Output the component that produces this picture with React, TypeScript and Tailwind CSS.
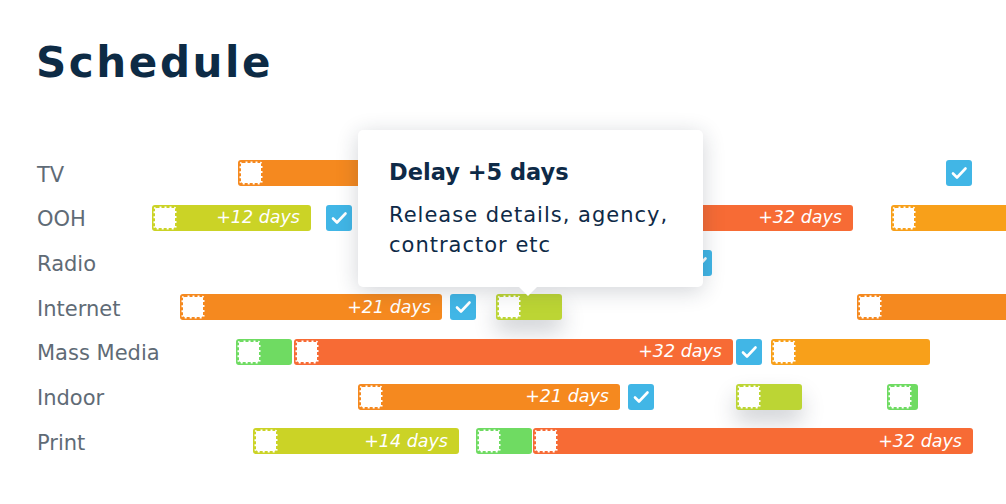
import React from "react";

type Item =
  | { kind: "bar"; left: number; right: number; color: string; text?: string; lifted?: boolean }
  | { kind: "check"; left: number };

const ORANGE = "#f5891f";
const RED = "#f76b35";
const AMBER = "#f8a01a";
const LIME = "#cbd326";
const LIME2 = "#bcd534";
const GREEN = "#6fdb62";

// left/right are positions on the timeline (px from page edge)
const rows: { label: string; items: Item[] }[] = [
  {
    label: "TV",
    items: [
      { kind: "bar", left: 238, right: 420, color: ORANGE },
      { kind: "check", left: 946 },
    ],
  },
  {
    label: "OOH",
    items: [
      { kind: "bar", left: 152, right: 311, color: LIME, text: "+12 days" },
      { kind: "check", left: 326 },
      { kind: "bar", left: 600, right: 853, color: RED, text: "+32 days" },
      { kind: "bar", left: 891, right: 1040, color: AMBER },
    ],
  },
  {
    label: "Radio",
    items: [{ kind: "check", left: 686 }],
  },
  {
    label: "Internet",
    items: [
      { kind: "bar", left: 180, right: 442, color: ORANGE, text: "+21 days" },
      { kind: "check", left: 450 },
      { kind: "bar", left: 496, right: 562, color: LIME2, lifted: true },
      { kind: "bar", left: 857, right: 1040, color: ORANGE },
    ],
  },
  {
    label: "Mass Media",
    items: [
      { kind: "bar", left: 236, right: 292, color: GREEN },
      { kind: "bar", left: 294, right: 733, color: RED, text: "+32 days" },
      { kind: "check", left: 736 },
      { kind: "bar", left: 771, right: 930, color: AMBER },
    ],
  },
  {
    label: "Indoor",
    items: [
      { kind: "bar", left: 358, right: 620, color: ORANGE, text: "+21 days" },
      { kind: "check", left: 628 },
      { kind: "bar", left: 736, right: 802, color: LIME2, lifted: true },
      { kind: "bar", left: 887, right: 918, color: GREEN },
    ],
  },
  {
    label: "Print",
    items: [
      { kind: "bar", left: 253, right: 459, color: LIME, text: "+14 days" },
      { kind: "bar", left: 476, right: 532, color: GREEN },
      { kind: "bar", left: 533, right: 973, color: RED, text: "+32 days" },
    ],
  },
];

// white square with a dotted outline at the start of each bar
const DottedBox = ({ color }: { color: string }) => (
  <svg width="26" height="26" viewBox="0 0 26 26" className="absolute left-0 top-0">
    <rect x="1.5" y="1.5" width="23" height="23" rx="3" fill="#fff" stroke={color} strokeWidth="3" strokeDasharray="3 2" />
  </svg>
);

const Check = ({ left }: { left: number }) => (
  <div
    className="absolute top-1/2 -translate-y-1/2 w-[26px] h-[26px] rounded-[3px] bg-[#41b6e6] flex items-center justify-center"
    style={{ left }}
  >
    <svg width="18" height="18" viewBox="0 0 18 18" fill="none">
      <path d="M3 9.5l4 4L15.5 4.5" stroke="#fff" strokeWidth="2.6" strokeLinecap="round" strokeLinejoin="round" />
    </svg>
  </div>
);

const Bar = ({ item }: { item: Extract<Item, { kind: "bar" }> }) => (
  <div
    className={`absolute top-1/2 -translate-y-1/2 h-[26px] rounded-[3px] flex items-center justify-end pr-[11px] ${
      item.lifted ? "shadow-[0_12px_22px_rgba(40,50,70,0.22)]" : ""
    }`}
    style={{ left: item.left, width: item.right - item.left, backgroundColor: item.color }}
  >
    <DottedBox color={item.color} />
    {item.text && <span className="text-white italic text-[17.5px] leading-none">{item.text}</span>}
  </div>
);

export default function App() {
  return (
    <div className="relative w-[1006px] h-[504px] overflow-hidden bg-white font-['DejaVu_Sans',sans-serif]">
      <h1 className="pl-[36px] pt-[38px] text-[42px] leading-[50px] font-bold text-[#0d2b45] tracking-[2.6px]">
        Schedule
      </h1>

      <div className="mt-[63px]">
        {rows.map((row) => (
          <div key={row.label} className="relative h-[44.67px] flex items-center pl-[37px]">
            <span className="pt-[4px] text-[21px] text-[#5f6b76]">{row.label}</span>
            {row.items.map((item, i) =>
              item.kind === "check" ? <Check key={i} left={item.left} /> : <Bar key={i} item={item} />
            )}
          </div>
        ))}
      </div>

      {/* tooltip */}
      <div className="absolute left-[358px] top-[130px] w-[345px] h-[157px] bg-white rounded-[5px] shadow-[0_4px_22px_rgba(30,40,60,0.2)] pl-[31px] pt-[26px] text-[#0e2a47]">
        <div className="text-[22.5px] font-bold leading-[32px]">Delay +5 days</div>
        <div className="mt-[12px] text-[21px] leading-[30px] tracking-[1px]">
          Release details, agency,
          <br />
          contractor etc
        </div>
        <div className="absolute left-[161px] bottom-[-9px] w-0 h-0 border-l-[9px] border-r-[9px] border-t-[9px] border-l-transparent border-r-transparent border-t-white" />
      </div>
    </div>
  );
}
